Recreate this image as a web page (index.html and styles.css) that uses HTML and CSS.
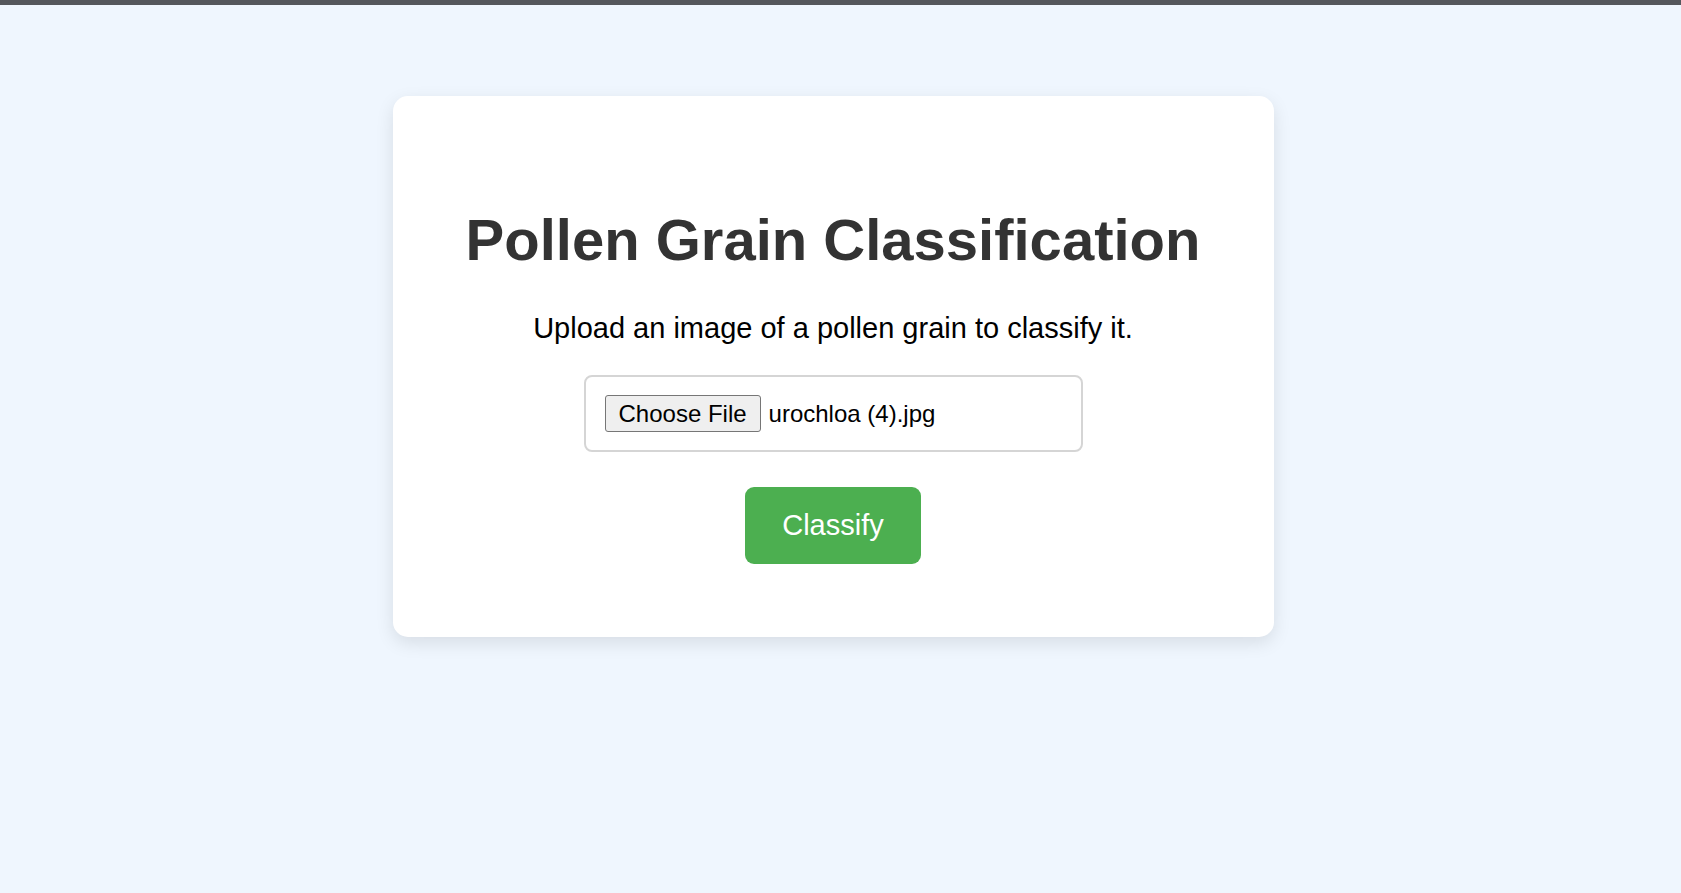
FILE: index.html
```html
<!DOCTYPE html>
<html lang="en">
<head>
<meta charset="utf-8">
<title>Pollen Grain Classification</title>
<link rel="stylesheet" href="styles.css">
</head>
<body>
<div class="topbar"></div>
<main class="page">
  <section class="card">
    <h1 class="title">Pollen Grain Classification</h1>
    <p class="subtitle">Upload an image of a pollen grain to classify it.</p>
    <form class="upload-form">
      <label class="file-box">
        <span class="file-button">Choose File</span>
        <span class="file-name">urochloa (4).jpg</span>
      </label>
      <button type="button" class="classify">Classify</button>
    </form>
  </section>
</main>
</body>
</html>
```
FILE: styles.css
```css
html, body {
  margin: 0;
  padding: 0;
}

body {
  background: #eff6fe;
  font-family: "Liberation Sans", Arial, sans-serif;
  min-height: 893px;
}

.topbar {
  height: 5px;
  background: #55575c;
}

.page {
  display: flex;
  justify-content: center;
  padding: 91px 15px 0 0;
}

.card {
  box-sizing: border-box;
  width: 881px;
  background: #ffffff;
  border-radius: 15px;
  box-shadow: 0 6px 18px rgba(0, 0, 0, 0.1);
  padding: 111px 40px 73px;
  display: flex;
  flex-direction: column;
  align-items: center;
}

.title {
  margin: 0;
  font-size: 58px;
  line-height: 66px;
  font-weight: bold;
  color: #333333;
  text-align: center;
}

.subtitle {
  margin: 39px 0 0;
  font-size: 29px;
  line-height: 33px;
  color: #000000;
  text-align: center;
}

.upload-form {
  display: flex;
  flex-direction: column;
  align-items: center;
  margin-top: 30px;
}

.file-box {
  box-sizing: border-box;
  width: 499px;
  height: 77px;
  border: 2px solid #d5d5d5;
  border-radius: 8px;
  padding: 18px 19px;
  display: flex;
  align-items: center;
  gap: 8px;
}

.file-button {
  box-sizing: border-box;
  height: 37px;
  padding: 0 13px;
  border: 1.5px solid #767676;
  border-radius: 3px;
  background: #efefef;
  color: #000000;
  font-size: 24px;
  display: flex;
  align-items: center;
}

.file-name {
  font-size: 24px;
  color: #000000;
}

.classify {
  margin-top: 35px;
  box-sizing: border-box;
  height: 77px;
  padding: 0 37px;
  border: none;
  border-radius: 9px;
  background: #4caf50;
  color: #ffffff;
  font-family: "Liberation Sans", Arial, sans-serif;
  font-size: 29px;
  cursor: pointer;
}
```
